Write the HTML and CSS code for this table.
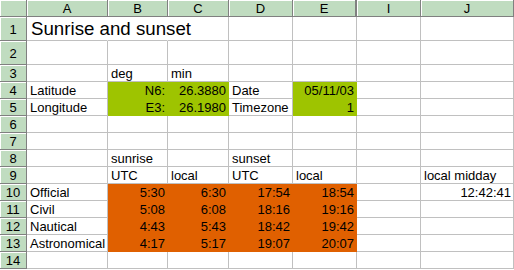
FILE: index.html
```
<!DOCTYPE html>
<html>
<head>
<meta charset="utf-8">
<link rel="stylesheet" href="styles.css">
</head>
<body>
<div class="sheet">
  <div class="h corner"></div>
  <div class="h col">A</div><div class="h col">B</div><div class="h col">C</div><div class="h col">D</div><div class="h col hid">E</div><div class="h col">I</div><div class="h col">J</div>

  <div class="h row">1</div><div class="c title">Sunrise and sunset</div><div class="c over"></div><div class="c"></div><div class="c"></div><div class="c"></div><div class="c"></div><div class="c"></div>
  <div class="h row">2</div><div class="c"></div><div class="c"></div><div class="c"></div><div class="c"></div><div class="c"></div><div class="c"></div><div class="c"></div>
  <div class="h row">3</div><div class="c"></div><div class="c">deg</div><div class="c">min</div><div class="c"></div><div class="c"></div><div class="c"></div><div class="c"></div>
  <div class="h row">4</div><div class="c">Latitude</div><div class="c r g">N6:</div><div class="c r g">26.3880</div><div class="c">Date</div><div class="c r g">05/11/03</div><div class="c"></div><div class="c"></div>
  <div class="h row">5</div><div class="c">Longitude</div><div class="c r g">E3:</div><div class="c r g">26.1980</div><div class="c">Timezone</div><div class="c r g">1</div><div class="c"></div><div class="c"></div>
  <div class="h row">6</div><div class="c"></div><div class="c"></div><div class="c"></div><div class="c"></div><div class="c"></div><div class="c"></div><div class="c"></div>
  <div class="h row">7</div><div class="c"></div><div class="c"></div><div class="c"></div><div class="c"></div><div class="c"></div><div class="c"></div><div class="c"></div>
  <div class="h row">8</div><div class="c"></div><div class="c">sunrise</div><div class="c"></div><div class="c">sunset</div><div class="c"></div><div class="c"></div><div class="c"></div>
  <div class="h row">9</div><div class="c"></div><div class="c">UTC</div><div class="c">local</div><div class="c">UTC</div><div class="c">local</div><div class="c"></div><div class="c">local midday</div>
  <div class="h row">10</div><div class="c">Official</div><div class="c r o">5:30</div><div class="c r o">6:30</div><div class="c r o">17:54</div><div class="c r o">18:54</div><div class="c"></div><div class="c r">12:42:41</div>
  <div class="h row">11</div><div class="c">Civil</div><div class="c r o">5:08</div><div class="c r o">6:08</div><div class="c r o">18:16</div><div class="c r o">19:16</div><div class="c"></div><div class="c"></div>
  <div class="h row">12</div><div class="c">Nautical</div><div class="c r o">4:43</div><div class="c r o">5:43</div><div class="c r o">18:42</div><div class="c r o">19:42</div><div class="c"></div><div class="c"></div>
  <div class="h row">13</div><div class="c">Astronomical</div><div class="c r o">4:17</div><div class="c r o">5:17</div><div class="c r o">19:07</div><div class="c r o">20:07</div><div class="c"></div><div class="c"></div>
  <div class="h row">14</div><div class="c"></div><div class="c"></div><div class="c"></div><div class="c"></div><div class="c"></div><div class="c"></div><div class="c"></div>
</div>
</body>
</html>
```
FILE: styles.css
```
* { box-sizing: border-box; }
html, body { margin: 0; padding: 0; background: #fff; }
body { width: 514px; height: 270px; overflow: hidden; }
.sheet {
  display: grid;
  grid-template-columns: 27px 81px 60px 61px 64px 64px 64px 93px;
  grid-template-rows: 17px 24px 24px repeat(12, 17px);
  font-family: "Liberation Sans", Arial, sans-serif;
  font-size: 13px;
  color: #000;
}
.h {
  background: #c0dcc0;
  border-right: 1px solid #808080;
  border-bottom: 1px solid #808080;
  box-shadow: inset 1px 1px 0 #fff;
  display: flex;
  align-items: center;
  justify-content: center;
  line-height: 15px;
  padding-top: 1px;
}
.h.hid { border-right: 2px solid #808080; }
.c {
  border-right: 1px solid #c0c0c0;
  border-bottom: 1px solid #c0c0c0;
  display: flex;
  align-items: flex-end;
  padding: 0 2px 0 3px;
  line-height: 15px;
  white-space: nowrap;
  overflow: visible;
}
.c.r { justify-content: flex-end; padding-right: 2px; }
.c.title {
  font-size: 18.7px;
  line-height: 22px;
  padding-left: 4px;
  border-right-color: transparent;
  position: relative;
  z-index: 1;
}
.c.over { border-right-color: transparent; }
.c.g { background: #9ec400; border-color: #9ec400; }
.c.o { background: #e06000; border-color: #e06000; }
```
